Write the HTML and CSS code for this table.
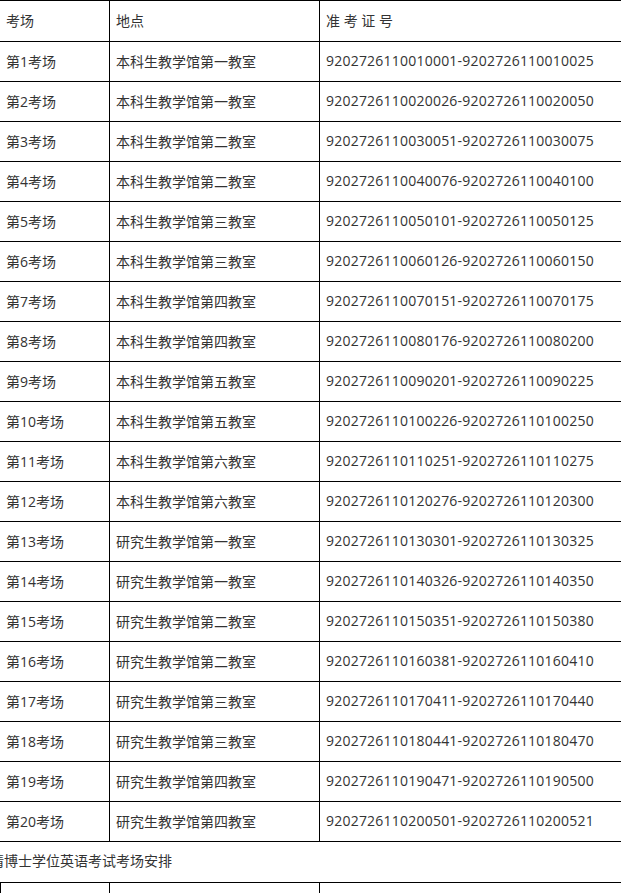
FILE: index.html
```html
<!DOCTYPE html>
<html lang="zh-CN">
<head>
<meta charset="utf-8">
<title>考场安排</title>
<link rel="stylesheet" href="styles.css">
</head>
<body>
<table class="exam first">
  <colgroup><col class="c1"><col class="c2"><col class="c3"></colgroup>
  <tr class="head"><td>考场</td><td>地点</td><td>准 考 证 号</td></tr>
  <tr><td>第1考场</td><td>本科生教学馆第一教室</td><td class="num">9202726110010001-9202726110010025</td></tr>
  <tr><td>第2考场</td><td>本科生教学馆第一教室</td><td class="num">9202726110020026-9202726110020050</td></tr>
  <tr><td>第3考场</td><td>本科生教学馆第二教室</td><td class="num">9202726110030051-9202726110030075</td></tr>
  <tr><td>第4考场</td><td>本科生教学馆第二教室</td><td class="num">9202726110040076-9202726110040100</td></tr>
  <tr><td>第5考场</td><td>本科生教学馆第三教室</td><td class="num">9202726110050101-9202726110050125</td></tr>
  <tr><td>第6考场</td><td>本科生教学馆第三教室</td><td class="num">9202726110060126-9202726110060150</td></tr>
  <tr><td>第7考场</td><td>本科生教学馆第四教室</td><td class="num">9202726110070151-9202726110070175</td></tr>
  <tr><td>第8考场</td><td>本科生教学馆第四教室</td><td class="num">9202726110080176-9202726110080200</td></tr>
  <tr><td>第9考场</td><td>本科生教学馆第五教室</td><td class="num">9202726110090201-9202726110090225</td></tr>
  <tr><td>第10考场</td><td>本科生教学馆第五教室</td><td class="num">9202726110100226-9202726110100250</td></tr>
  <tr><td>第11考场</td><td>本科生教学馆第六教室</td><td class="num">9202726110110251-9202726110110275</td></tr>
  <tr><td>第12考场</td><td>本科生教学馆第六教室</td><td class="num">9202726110120276-9202726110120300</td></tr>
  <tr><td>第13考场</td><td>研究生教学馆第一教室</td><td class="num">9202726110130301-9202726110130325</td></tr>
  <tr><td>第14考场</td><td>研究生教学馆第一教室</td><td class="num">9202726110140326-9202726110140350</td></tr>
  <tr><td>第15考场</td><td>研究生教学馆第二教室</td><td class="num">9202726110150351-9202726110150380</td></tr>
  <tr><td>第16考场</td><td>研究生教学馆第二教室</td><td class="num">9202726110160381-9202726110160410</td></tr>
  <tr><td>第17考场</td><td>研究生教学馆第三教室</td><td class="num">9202726110170411-9202726110170440</td></tr>
  <tr><td>第18考场</td><td>研究生教学馆第三教室</td><td class="num">9202726110180441-9202726110180470</td></tr>
  <tr><td>第19考场</td><td>研究生教学馆第四教室</td><td class="num">9202726110190471-9202726110190500</td></tr>
  <tr><td>第20考场</td><td>研究生教学馆第四教室</td><td class="num">9202726110200501-9202726110200521</td></tr>
</table>
<p class="caption">请博士学位英语考试考场安排</p>
<table class="exam second">
  <colgroup><col class="c1"><col class="c2"><col class="c3"></colgroup>
  <tr class="head"><td>考场</td><td>地点</td><td>准 考 证 号</td></tr>
</table>
</body>
</html>
```
FILE: styles.css
```css
html, body {
  margin: 0;
  padding: 0;
  background: #fff;
  overflow: hidden;
}
body {
  font-family: "Open Sans", "Noto Sans CJK SC", sans-serif;
  font-size: 14px;
  color: #333;
}
.exam {
  border-collapse: collapse;
  table-layout: fixed;
}
.exam.first {
  width: 622px;
  margin-left: -1px;
}
.exam.second {
  width: 621px;
}
.exam td {
  border: 1px solid #000;
  height: 40px;
  padding: 0 0 2px 6px;
  box-sizing: border-box;
  white-space: nowrap;
  vertical-align: middle;
}
.exam .head td {
  height: 41px;
}
.exam.second .head td {
  height: 48px;
}
.exam td.num {
  letter-spacing: 0.22px;
}
.exam .c1 { width: 110px; }
.exam .c2 { width: 210px; }
.exam .c3 { width: 302px; }
.exam.second .c1 { width: 109px; }
.caption {
  margin: 0 0 0 -10px;
  height: 40px;
  line-height: 38px;
  white-space: nowrap;
}
```
